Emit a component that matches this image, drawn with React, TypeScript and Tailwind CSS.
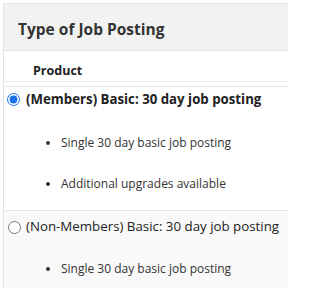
export default function App() {
  return (
    <div className="h-[288px] w-[288px] overflow-hidden bg-white pl-[3px] pt-[3px] font-['Open_Sans',sans-serif] text-[#222]">
      <div className="border-y border-l border-[#e3e3e3]">
        <div className="flex h-[47px] items-center border-b border-[#e3e3e3] bg-[#f2f2f2] px-[14px] pt-[6px]">
          <h2 className="text-[15.5px] font-bold text-[#333]">Type of Job Posting</h2>
        </div>
        <div className="h-[31px] border-b border-[#eee] pl-[29px] pt-[11px] text-[12.5px] font-bold leading-[18px]">
          Product
        </div>
        <div className="mt-[4px] border-t border-[#e6e6e6]">
          <div className="border-b border-[#e6e6e6] pb-[17px]">
            <label className="flex h-[24px] items-center gap-[6px] pl-[3px] pt-[1px]">
              <input type="radio" name="job" defaultChecked className="m-0 h-[13px] w-[13px] shrink-0 accent-[#1a73e8]" />
              <span className="whitespace-nowrap text-[13.25px] font-bold">(Members) Basic: 30 day job posting</span>
            </label>
            <ul className="ml-[57px] list-disc text-[12px] leading-[18px] text-[#333]">
              <li className="mt-[23px]">Single 30 day basic job posting</li>
              <li className="mt-[23px]">Additional upgrades available</li>
            </ul>
          </div>
          <div className="bg-[#f9f9f9] pb-[20px]">
            <label className="flex h-[32px] items-center gap-[5px] pl-[4px]">
              <input type="radio" name="job" className="m-0 h-[13px] w-[13px] shrink-0" />
              <span className="whitespace-nowrap text-[13.3px]">(Non-Members) Basic: 30 day job posting</span>
            </label>
            <ul className="ml-[57px] list-disc text-[12px] leading-[18px] text-[#333]">
              <li className="mt-[17px]">Single 30 day basic job posting</li>
            </ul>
          </div>
        </div>
      </div>
    </div>
  )
}
